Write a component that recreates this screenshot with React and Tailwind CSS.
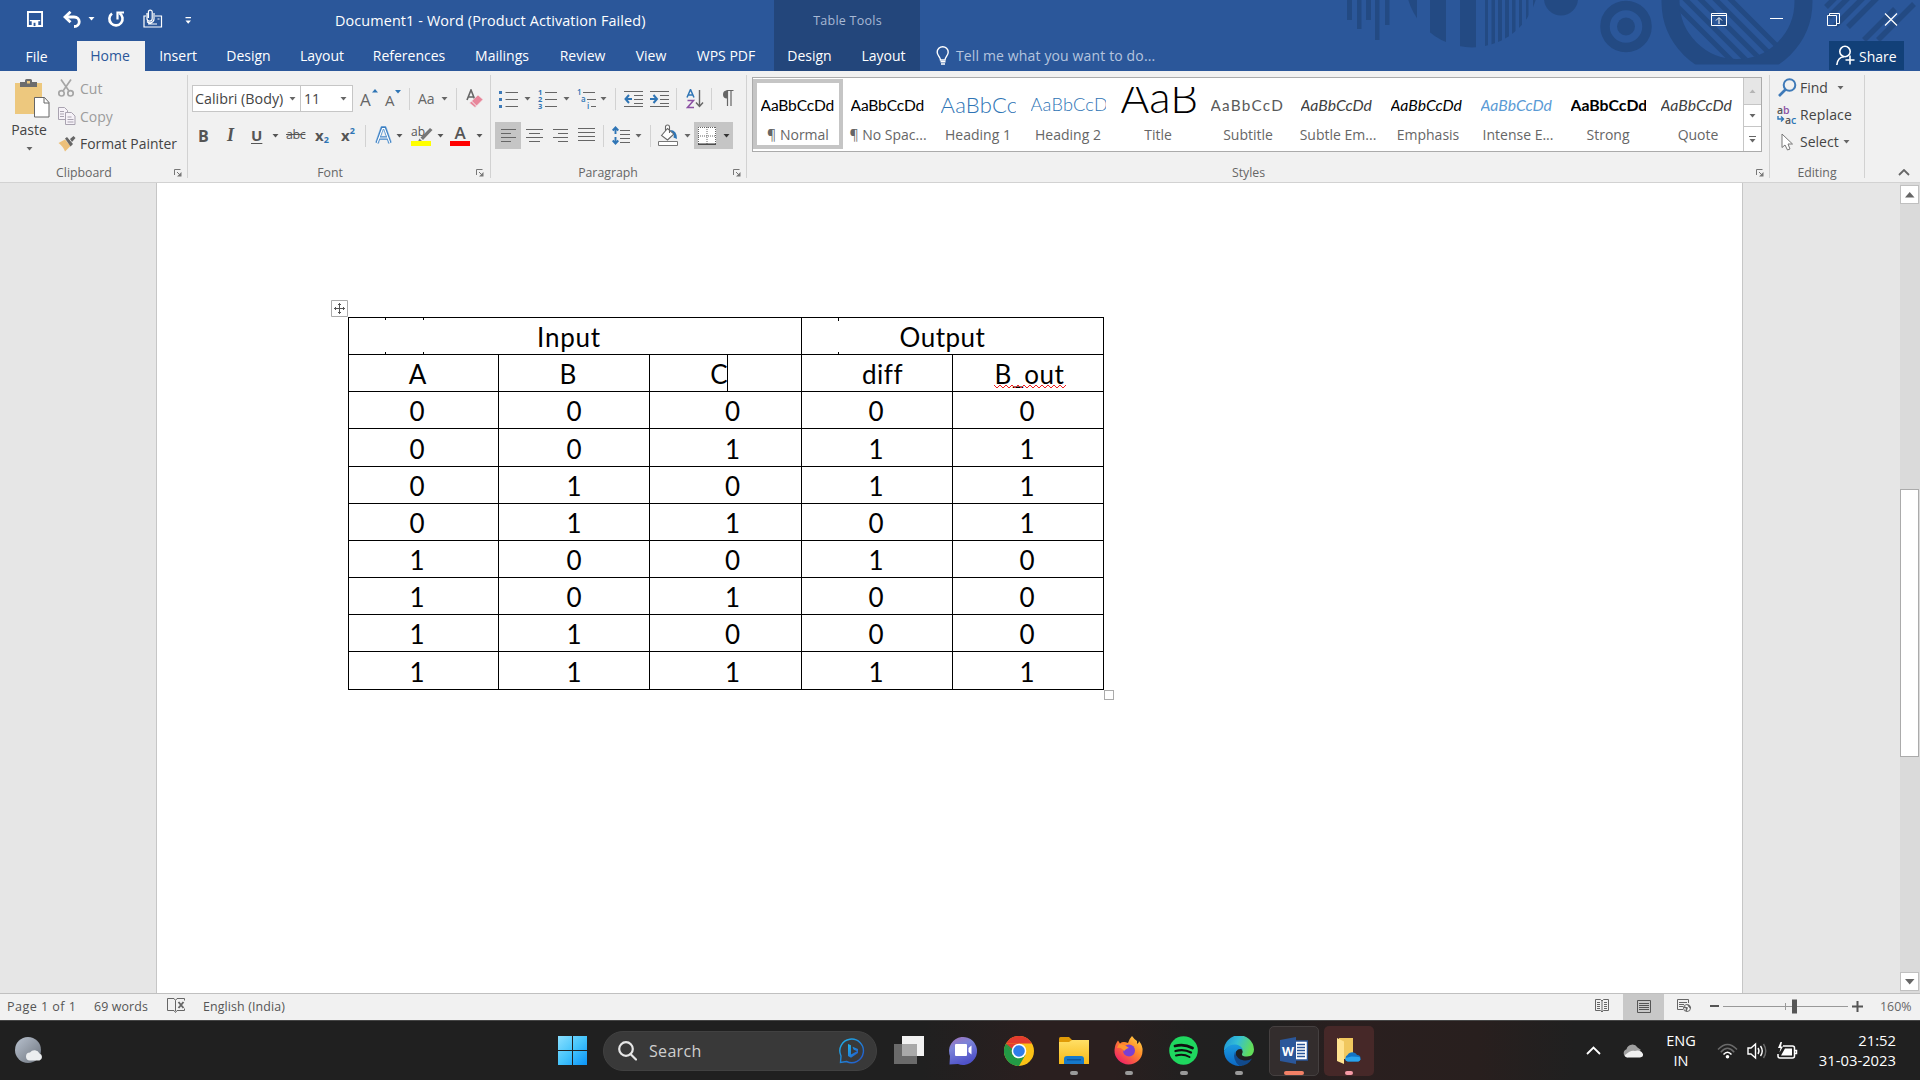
import React from "react";

const Caret = ({ className = "" }) => (
  <svg className={"shrink-0 " + className} width="7" height="4" viewBox="0 0 7 4">
    <path d="M0.5 0H6.5L3.5 3.6Z" fill="currentColor" />
  </svg>
);

const Sep = ({ className = "" }) => <div className={"h-[22px] w-px shrink-0 bg-[#d2d2d2] " + className} />;

const Launcher = ({ className = "" }) => (
  <svg className={"shrink-0 " + className} width="8" height="8" viewBox="0 0 8 8" fill="none" stroke="#777">
    <path d="M0.5 6V0.5H6.5M3 3L6 6" />
    <path d="M7.5 3V7.5H3Z" fill="#777" stroke="none" />
  </svg>
);

const T = ({ className = "", children }) => (
  <div className={"flex shrink-0 items-center whitespace-nowrap " + className}>{children}</div>
);

/* ---------- title bar ---------- */

const RibbonArt = () => (
  <svg className="absolute right-0 top-0" width="580" height="71" viewBox="1340 0 580 71" fill="#234a83">
    <path d="M1347 0h5v20h-5zM1357 0h4.500v29h-4.500zM1366 0h5v20h-5zM1375 0h4.500v40h-4.500zM1385 0h4.500v25h-4.500z" />
    <clipPath id="disc"><circle cx="1472" cy="-19" r="66.400" /></clipPath>
    <g clipPath="url(#disc)">
      <path d="M1404 0h13v60h-13zM1430 0h16v60h-16zM1460 0h16v60h-16zM1485 0h3v60h-3zM1491.500 0h3.500v60h-3.500zM1498 0h4v60h-4zM1505 0h4v60h-4zM1512 0h3.500v60h-3.500zM1519 0h3v60h-3zM1526 0h2.500v60h-2.500zM1533 0h3v60h-3z" />
    </g>
    <circle cx="1561" cy="-1.500" r="17" />
    <circle cx="1626" cy="26.500" r="21" fill="none" stroke="#234a83" strokeWidth="9.500" />
    <circle cx="1626" cy="26.500" r="9" />
    <clipPath id="ringClip"><path d="M1650 0h180v64.500h-180z" /></clipPath>
    <g clipPath="url(#ringClip)">
      <circle cx="1737" cy="1.500" r="66.500" fill="none" stroke="#234a83" strokeWidth="18" />
    </g>
    <clipPath id="ringInner"><circle cx="1737" cy="1.500" r="58" /></clipPath>
    <g clipPath="url(#ringInner)" stroke="#234a83" strokeWidth="5" fill="none">
      <path d="M1668 -3L1738 67M1683 -3L1753 67M1698 -3L1768 67M1711 -5L1781 65M1724 -7L1794 63" />
    </g>
    <g stroke="#234a83" strokeWidth="5.500" fill="none">
      <path d="M1826 7L1836 -3M1829 17L1849 -3M1835 26L1864 -3M1848 27L1878 -3M1864 40L1895 9M1878 40L1914 4" />
    </g>
  </svg>
);

const tabs = [
  ["Insert", "ml-[15px] w-[36px]"],
  ["Design", "ml-[30px] w-[45px]"],
  ["Layout", "ml-[29px] w-[44px]"],
  ["References", "ml-[29px] w-[72px]"],
  ["Mailings", "ml-[29px] w-[56px]"],
  ["Review", "ml-[29px] w-[47px]"],
  ["View", "ml-[29px] w-[32px]"],
  ["WPS PDF", "ml-[29px] w-[60px]"],
];

const TitleBar = () => (
  <header className="relative flex h-[71px] shrink-0 bg-[#2b579a] text-[14px] text-white">
    <RibbonArt />
    <div className="flex w-[774px] flex-col">
      <div className="flex h-[41px] items-center">
        <svg className="ml-[27px] mt-[-3px] shrink-0" width="16" height="16" viewBox="0 0 17 17">
          <path d="M1 1H16V16H1Z" fill="none" stroke="#fff" strokeWidth="2" />
          <path d="M3 9.500h11v1.500H3zM5 11h7v5H5z" fill="#fff" />
          <path d="M7 12.500h2V16H7z" fill="#2b579a" />
        </svg>
        <svg className="ml-[20px] mt-[-3px] shrink-0" width="19" height="17" viewBox="0 0 19 17" fill="none" stroke="#fff" strokeWidth="2.800">
          <path d="M2.500 6H11c7 0 7 9.500 0 9.500" />
          <path d="M7.500 0.800L2 6l5.500 5.200" />
        </svg>
        <Caret className="-mt-[4px] ml-[6px]" />
        <svg className="ml-[12px] mt-[-3px] shrink-0" width="18" height="18" viewBox="0 0 18 18" fill="none" stroke="#fff" strokeWidth="2.600">
          <path d="M5 3.500A6.600 6.600 0 1 0 12.500 3.200" />
          <path d="M10.500 9.500V2.500H17" strokeWidth="2.200" />
        </svg>
        <svg className="ml-[18px] mt-[-5px] shrink-0" width="20" height="19" viewBox="0 0 20 19" fill="none" stroke="#fff" strokeWidth="1.200">
          <path d="M3 7H1v11h17.500V7H12" />
          <path d="M4 4v5.500a2.600 2.600 0 0 0 5.200 0V3a1.900 1.900 0 0 0-3.800 0v6M11 4v6a4 4 0 0 1-7 2.500M14.500 10h2M5 15h9" />
        </svg>
        <svg className="ml-[22px] shrink-0" width="7" height="8" viewBox="0 0 7 8" fill="#fff"><path d="M0.500 0h5.500v1.300H0.500zM0.500 3.500h5.500L3.200 6.800z" /></svg>
        <T className="ml-[143px] w-[306px] text-[14.400px] tracking-[0.008em]">Document1 - Word (Product Activation Failed)</T>
      </div>
      <div className="flex h-[30px] items-center">
        <T className="w-[77px] justify-center pr-[4px] pt-[1px]">File</T>
        <T className="h-full w-[68px] justify-center bg-[#f1f1f1] pb-[2px] pr-[2px] text-[#2b579a]">Home</T>
        {tabs.map(([name, cls]) => (
          <T key={name} className={"justify-center pb-[2px] " + cls}>{name}</T>
        ))}
      </div>
    </div>
    <div className="flex w-[146px] flex-col bg-[#23467b]">
      <T className="h-[41px] justify-center pl-[1px] pt-[1px] text-[12.500px] tracking-[0.02em] text-[#a8b9d5]">Table Tools</T>
      <div className="flex h-[30px] pb-[2px]">
        <T className="ml-[13px] w-[45px] justify-center">Design</T>
        <T className="ml-[29px] w-[45px] justify-center">Layout</T>
      </div>
    </div>
    <div className="relative flex flex-1 flex-col">
      <div className="flex h-[41px] items-start justify-end pr-[22px] pt-[13px]">
        <svg width="16" height="13" viewBox="0 0 16 13" fill="none" stroke="#fff"><path d="M0.500 0.500h15v12h-15zM0.500 2.500h15M8 11V5M5 7.500L8 4.500L11 7.500" /></svg>
        <svg className="ml-[43px]" width="13" height="13" viewBox="0 0 13 13" stroke="#fff"><path d="M0 5.500h13" /></svg>
        <svg className="ml-[44px]" width="13" height="13" viewBox="0 0 13 13" fill="none" stroke="#fff"><path d="M0.500 2.500h9v10h-9zM2.500 2.500v-2h10v10h-2.500" /></svg>
        <svg className="ml-[44px]" width="14" height="13" viewBox="0 0 14 13" stroke="#fff" strokeWidth="1.200"><path d="M1 0.500L13 12.500M13 0.500L1 12.500" /></svg>
      </div>
      <div className="flex h-[30px] items-start">
        <svg className="ml-[16px] mt-[5px] shrink-0" width="14" height="20" viewBox="0 0 14 20" fill="none" stroke="#fff" strokeWidth="1.400">
          <path d="M4.500 14C4.500 11 1.200 9.500 1.200 6.200a5.500 5.500 0 0 1 11 0C12.200 9.500 9 11 9 14ZM4.500 15.800h5M5 18h4" />
        </svg>
        <T className="ml-[6px] h-[29px] text-[14px] tracking-[0.01em] text-[#b5c5df]">Tell me what you want to do...</T>
        <T className="ml-auto mr-[16px] h-[29px] w-[75px] bg-[#124078] pl-[7px]">
          <svg width="20" height="21" viewBox="0 0 20 21" fill="none" stroke="#fff" strokeWidth="1.600">
            <circle cx="9" cy="6.500" r="5.200" /><path d="M0.800 20C1.500 14.500 4 12 8 11.800M14 10.500v9M9.500 15h9" />
          </svg>
          <span className="ml-[3px] pt-[1px]">Share</span>
        </T>
      </div>
    </div>
  </header>
);

/* ---------- ribbon ---------- */

const Group = ({ width, label, launcher, labelPad = "", children }) => (
  <div className={"flex shrink-0 flex-col " + width}>
    <div className="h-[88px]">{children}</div>
    <div className="flex h-[23px] items-center pt-[4px]">
      <span className={"flex-1 whitespace-nowrap text-center text-[12.300px] leading-[18px] text-[#666] " + labelPad}>{label}</span>
      {launcher && <Launcher className="mr-[5px]" />}
    </div>
  </div>
);
const GroupLine = () => <div className="mt-[4px] h-[103px] w-px shrink-0 bg-[#d2d2d2]" />;

const Clipboard = () => (
  <Group width="w-[187px]" label="Clipboard" launcher labelPad="pr-[6px]">
    <div className="flex text-[#444]">
      <div className="flex w-[58px] flex-col items-center pt-[8px]">
        <svg className="ml-[6px]" width="35" height="39" viewBox="0 0 35 39">
          <path d="M0 4h27v31H0z" fill="#edc87e" />
          <path d="M5 8V3h5V1.500Q10 0 11.500 0h4Q17 0 17 1.500V3h5v5z" fill="#6d6d6d" /><path d="M12 2h3v2.500h-3z" fill="#edc87e" />
          <path d="M19.500 18.500h10l4.500 5v14.500h-14.500z" fill="#fff" stroke="#666" /><path d="M29 18.500v5.500h5" fill="none" stroke="#666" />
        </svg>
        <span className="mt-[3px] text-[14px] leading-[18px]">Paste</span>
        <Caret className="mt-[8px] text-[#666]" />
      </div>
      <div className="flex flex-col pt-[3px] text-[14px]">
        <T className="h-[28px] text-[#9c9c9c]">
          <svg width="16" height="18" viewBox="0 0 16 18" fill="none" stroke="#a6a6a6" strokeWidth="1.700">
            <path d="M3 0.500L11 12M13 0.500L5 12" /><circle cx="3.500" cy="14.300" r="2.700" /><circle cx="12.500" cy="14.300" r="2.700" />
          </svg>
          <span className="ml-[6px]">Cut</span>
        </T>
        <T className="h-[28px] text-[#9c9c9c]">
          <svg width="18" height="18" viewBox="0 0 18 18" fill="#f6f2f8" stroke="#a9a3b0">
            <path d="M0.500 0.500h6l3 3v9h-9zM2 4.500h4M2 7h4M2 9.500h4" /><path d="M7.500 5.500h6l3.500 3.500v8.500H7.500zM9.500 10h4M9.500 12.500h6M9.500 15h6" />
          </svg>
          <span className="ml-[4px]">Copy</span>
        </T>
        <T className="h-[28px]">
          <svg width="18" height="16" viewBox="0 0 18 16">
            <path d="M0.500 7L7 3.500L12.500 10L7 15.500Q5 10 0.500 7" fill="#edc07a" /><path d="M7 2.500L9 1L15 8L12.500 10.500zM12 3L15.500 0L17.500 2L14 6z" fill="#666" />
          </svg>
          <span className="ml-[4px] text-[13.900px]">Format Painter</span>
        </T>
      </div>
    </div>
  </Group>
);

const FontGroup = () => (
  <Group width="w-[301px]" label="Font" launcher labelPad="pr-[4px]">
    <div className="mt-[14px] flex h-[27px] items-center pl-[4px] text-[#666]">
      <div className="flex h-[27px] w-[109px] shrink-0 items-center border border-[#c6c6c6] bg-white">
        <span className="ml-[2px] w-[90px] overflow-hidden whitespace-nowrap text-[14.300px] leading-[20px] text-[#444]">Calibri (Body)</span>
        <Caret className="ml-[4px]" />
      </div>
      <div className="-ml-px flex h-[27px] w-[53px] shrink-0 items-center border border-[#c6c6c6] bg-white">
        <span className="ml-[3px] w-[36px] text-[14px] text-[#444]">11</span>
        <Caret />
      </div>
      <T className="ml-[7px] w-[16px] pt-[2px] text-[17px]">A</T>
      <svg className="-ml-[4px] -mt-[15px] shrink-0" width="6" height="4" viewBox="0 0 6 4"><path d="M0 3.500h6L3 0z" fill="#2f75b5" /></svg>
      <T className="ml-[7px] w-[14px] pt-[3px] text-[15px]">A</T>
      <svg className="-ml-[4px] -mt-[14px] shrink-0" width="6" height="4" viewBox="0 0 6 4"><path d="M0 0h6L3 3.500z" fill="#2f75b5" /></svg>
      <Sep className="ml-[8px]" />
      <T className="ml-[8px] w-[20px] text-[14px]">Aa</T>
      <Caret className="ml-[3px]" />
      <Sep className="ml-[8px]" />
      <svg className="ml-[9px] shrink-0" width="18" height="19" viewBox="0 0 18 19">
        <path d="M1 11L5 1L9 11M2.500 8h5" stroke="#666" strokeWidth="1.600" fill="none" /><path d="M3.500 14L12 6l5 4.500L9 18.500z" fill="#e8869a" stroke="#f1f1f1" strokeWidth="0.600" /><path d="M5.500 12L10.500 17" stroke="#f1f1f1" />
      </svg>
    </div>
    <div className="mt-[10px] flex h-[27px] items-center text-[#555]">
      <T className="ml-[10px] w-[13px] text-[16px] font-bold">B</T>
      <T className="ml-[14px] w-[12px] pl-[2px] font-['Liberation_Serif'] text-[18px] font-bold italic">I</T>
      <T className="ml-[14px] w-[13px] text-[15px] font-bold underline underline-offset-2">U</T>
      <Caret className="ml-[8px]" />
      <T className="ml-[7px] w-[21px] text-[12.500px] tracking-[-0.03em] line-through">abc</T>
      <T className="ml-[8px] w-[16px] text-[15px] font-bold">x<span className="mt-[8px] text-[9px] text-[#2f75b5]">2</span></T>
      <T className="ml-[10px] w-[16px] text-[15px] font-bold">x<span className="-mt-[10px] text-[9px] text-[#2f75b5]">2</span></T>
      <Sep className="ml-[8px]" />
      <svg className="ml-[9px] shrink-0" width="17" height="19" viewBox="0 0 17 19" fill="none">
        <path d="M2 17L7.200 2H9.800L15 17M4.500 12H12.500" stroke="#9cc3e8" strokeWidth="4" strokeLinejoin="round" /><path d="M2 17L7.200 2H9.800L15 17M4.500 12H12.500" stroke="#3d7fc0" strokeWidth="2.800" /><path d="M2.200 16.700L7.500 2.500H9.500L14.800 16.700M4.500 12H12.500" stroke="#fff" strokeWidth="1.200" />
      </svg>
      <Caret className="ml-[4px]" />
      <div className="ml-[8px] flex w-[20px] shrink-0 flex-col">
        <div className="flex h-[15px] items-start text-[12px] leading-[11px]">
          ab
          <svg className="-ml-[9px] mt-[1px] shrink-0" width="17" height="15" viewBox="0 0 17 15"><path d="M14 1L16.500 3L7 13L4.500 10.500zM3.500 11.500L6 14L2 14.500z" fill="#777" /></svg>
        </div>
        <div className="h-[5px] bg-[#ffff00]" />
      </div>
      <Caret className="ml-[6px]" />
      <div className="ml-[6px] flex w-[20px] shrink-0 flex-col items-center">
        <span className="h-[15px] text-[17px] font-semibold leading-[13px]">A</span>
        <div className="h-[5px] w-full bg-[#ff0000]" />
      </div>
      <Caret className="ml-[6px]" />
    </div>
  </Group>
);

const Lines = ({ d, className = "" }) => (
  <svg className={"shrink-0 " + className} width="17" height="15" viewBox="0 0 17 15" stroke="#666" fill="none"><path d={d} /></svg>
);

const Paragraph = () => (
  <Group width="w-[255px]" label="Paragraph" launcher labelPad="pr-[8px]">
    <div className="mt-[14px] flex h-[27px] items-center text-[#666]">
      <svg className="ml-[8px] shrink-0" width="19" height="18" viewBox="0 0 19 18"><path d="M6.500 2.500H19M6.500 9.500H19M6.500 16.500H19" stroke="#666" /><path d="M0 1h3v3H0zM0 8h3v3H0zM0 15h3v3H0z" fill="#3d7ab8" /></svg>
      <Caret className="ml-[6px]" />
      <svg className="ml-[7px] shrink-0 overflow-visible" width="19" height="20" viewBox="0 0 19 20"><path d="M7 3.500H19M7 10.500H19M7 17.500H19" stroke="#666" /><g fill="#2f75b5" fontSize="7.500" fontWeight="700" fontFamily="Open Sans"><text x="0" y="6">1</text><text x="0" y="13">2</text><text x="0" y="20">3</text></g></svg>
      <Caret className="ml-[6px]" />
      <svg className="ml-[7px] shrink-0 overflow-visible" width="19" height="20" viewBox="0 0 19 20"><path d="M6 3.500H18M10 10.500H19M14 17.500H19" stroke="#666" /><g fill="#2f75b5" fontSize="8" fontWeight="600" fontFamily="Open Sans"><text x="0" y="6">1</text><text x="4" y="13">a</text><text x="10" y="20">i</text></g></svg>
      <Caret className="ml-[4px]" />
      <Sep className="ml-[8px]" />
      <svg className="ml-[8px] shrink-0" width="19" height="18" viewBox="0 0 19 18" fill="none"><path d="M0 1.500H19M10 5.500h9M10 9.500h9M10 13.500h9M0 16.500H19" stroke="#666" /><path d="M8 9H2M5 5L1.500 9L5 13" stroke="#2f75b5" strokeWidth="2" /></svg>
      <svg className="ml-[7px] shrink-0" width="19" height="18" viewBox="0 0 19 18" fill="none"><path d="M0 1.500H19M10 5.500h9M10 9.500h9M10 13.500h9M0 16.500H19" stroke="#666" /><path d="M0 9H6M3.500 5L7 9L3.500 13" stroke="#2f75b5" strokeWidth="2" /></svg>
      <Sep className="ml-[7px]" />
      <svg className="ml-[9px] shrink-0" width="18" height="20" viewBox="0 0 18 20" fill="none"><path d="M1 8.500L4.500 0.500L8 8.500M2.500 6h4" stroke="#2f75b5" strokeWidth="1.500" /><path d="M1.500 11.500H7.500L1.500 18.500H8" stroke="#8c51a5" strokeWidth="1.500" /><path d="M13.500 1V17M10 13.500L13.500 17.500L17 13.500" stroke="#666" strokeWidth="1.400" /></svg>
      <Sep className="ml-[7px]" />
      <svg className="ml-[9px] shrink-0" width="13" height="17" viewBox="0 0 13 17"><path d="M5.500 0.500H12.500M6.500 1V16M10 1V16" stroke="#666" strokeWidth="1.200" /><path d="M6 0.500a4 4 0 0 0 0 8z" fill="#666" /></svg>
    </div>
    <div className="mt-[10px] flex h-[27px] items-center text-[#666]">
      <div className="ml-[4px] flex h-full w-[26px] items-center justify-center bg-[#c5c5c5]"><Lines d="M1 1.500h15M1 5.500h10M1 9.500h15M1 13.500h10" /></div>
      <Lines className="ml-[5px]" d="M0 1.500h17M3 5.500h11M0 9.500h17M3 13.500h11" />
      <Lines className="ml-[9px]" d="M1 1.500h15M6 5.500h10M1 9.500h15M6 13.500h10" />
      <Lines className="ml-[9px]" d="M0 0.500h17M0 4.500h17M0 8.500h17M0 12.500h17" />
      <Sep className="ml-[8px]" />
      <svg className="ml-[8px] shrink-0" width="18" height="19" viewBox="0 0 18 19" fill="none"><path d="M8 4.500h10M8 8.500h10M8 12.500h10M8 16.500h10" stroke="#666" /><path d="M3.500 1.500V8M0.700 4.500L3.500 1.500L6.300 4.500M3.500 11V17.500M0.700 14.500L3.500 17.500L6.300 14.500" stroke="#2f75b5" strokeWidth="1.900" /></svg>
      <Caret className="ml-[5px]" />
      <Sep className="ml-[8px]" />
      <svg className="ml-[7px] shrink-0" width="21" height="23" viewBox="0 -1 21 23" fill="none"><path d="M3.500 10.500L9.500 3.500L16 9L9.500 15zM7.500 6V2a2 2 0 0 1 4 0V8" stroke="#666" strokeWidth="1.100" fill="#fff" /><path d="M12 5Q19 5 19 14L15.500 12.500L16 9z" fill="#2f75b5" /><path d="M0.500 16.500h19v4h-19z" fill="#fff" stroke="#777" /></svg>
      <Caret className="ml-[5px]" />
      <div className="ml-[3px] flex h-full w-[39px] items-center bg-[#c5c5c5] pl-[4px] text-[#333]">
        <svg width="18" height="18" viewBox="0 0 18 18"><path d="M0 0h18v18H0z" fill="#fff" /><path d="M0.500 0V18M17.500 0V18M9 0V18M0 0.500H18M0 9H18" stroke="#666" strokeDasharray="1 1" /><path d="M0 17.200H18" stroke="#444" strokeWidth="1.500" /></svg>
        <Caret className="ml-[7px]" />
      </div>
    </div>
  </Group>
);

const styleList = [
  ["AaBbCcDd", "¶ Normal", "mb-[5px] text-[15.600px] tracking-[-0.01em] text-black"],
  ["AaBbCcDd", "¶ No Spac...", "mb-[5px] text-[15.600px] tracking-[-0.01em] text-black"],
  ["AaBbCc", "Heading 1", "mb-[5px] text-[22px] font-light text-[#2e74b5] tracking-[0.01em]"],
  ["AaBbCcD", "Heading 2", "mb-[6px] text-[18.200px] font-light text-[#2e74b5] tracking-[0.01em]"],
  ["AaB", "Title", "mb-[14px] text-[44px] font-light text-black"],
  ["AaBbCcD", "Subtitle", "mb-[5px] text-[15.300px] tracking-[0.08em] text-[#5a5a5a]"],
  ["AaBbCcDd", "Subtle Em...", "mb-[5px] text-[15.800px] italic text-[#404040]"],
  ["AaBbCcDd", "Emphasis", "mb-[5px] text-[15.800px] italic text-black"],
  ["AaBbCcDd", "Intense E...", "mb-[5px] text-[15.800px] italic text-[#5b9bd5]"],
  ["AaBbCcDd", "Strong", "mb-[5px] text-[15.800px] font-bold text-black"],
  ["AaBbCcDd", "Quote", "mb-[5px] text-[15.800px] italic text-[#404040]"],
];

const Styles = () => (
  <Group width="w-[1022px]" label="Styles" launcher labelPad="pr-[6px]">
    <div className="ml-[5px] mt-[6px] flex h-[75px] w-[1010px] border border-[#ababab] bg-white">
      {styleList.map(([sample, name, cls], i) => (
        <div key={name} className={"mt-[1px] flex h-[70px] w-[90px] shrink-0 flex-col items-center border-4 " + (i === 0 ? "border-[#c5c5c5]" : "border-transparent")}>
          <div className="mt-[4px] flex h-[33px] w-[75px] shrink-0 items-end overflow-hidden">
            <span className={"whitespace-nowrap font-['Lato'] leading-[20px] " + cls}>{sample}</span>
          </div>
          <span className="mt-[5px] whitespace-nowrap text-[14px] leading-[19px] text-[#666]">{name}</span>
        </div>
      ))}
      <div className="ml-auto flex w-[18px] flex-col border-l border-[#c6c6c6] text-[#666]">
        <div className="flex h-[26px] items-center justify-center bg-[#e6e6e6] text-[#b5b5b5]"><Caret className="rotate-180" /></div>
        <div className="flex h-[23px] items-center justify-center border-y border-[#c6c6c6]"><Caret /></div>
        <div className="flex flex-1 flex-col items-center justify-center"><div className="mb-[2px] h-px w-[7px] bg-[#666]" /><Caret /></div>
      </div>
    </div>
  </Group>
);

const Editing = () => (
  <Group width="w-[94px]" label="Editing">
    <div className="flex flex-col pl-[7px] pt-[3px] text-[14px] text-[#444]">
      <T className="h-[27px]">
        <svg className="ml-[1px]" width="19" height="19" viewBox="0 0 19 19" fill="none" stroke="#3f7ab8"><circle cx="11.500" cy="7" r="5.800" strokeWidth="2" /><path d="M7.500 11.500L1 18" strokeWidth="2.600" /></svg>
        <span className="ml-[3px] w-[37px]">Find</span><Caret className="text-[#666]" />
      </T>
      <T className="h-[27px]">
        <svg className="overflow-visible" width="20" height="20" viewBox="0 0 20 20" fontFamily="Open Sans" fontSize="10.500" fontWeight="600"><text x="0" y="9" fill="#555">a</text><text x="6" y="9" fill="#8c51a5">b</text><text x="8" y="18.500" fill="#555">a</text><text x="14" y="18.500" fill="#2f75b5">c</text><path d="M1 11v3h5M4 11.500L6.500 14L4 16.500" stroke="#2f75b5" strokeWidth="1.400" fill="none" /></svg>
        <span className="ml-[3px] tracking-[0.01em]">Replace</span>
      </T>
      <T className="h-[27px]">
        <svg className="ml-[4px]" width="13" height="18" viewBox="0 0 13 18"><path d="M1 1V14.500L4 12L6.500 17L9 16L7 11H11.500z" fill="#fff" stroke="#777" /></svg>
        <span className="ml-[6px] w-[43px]">Select</span><Caret className="text-[#666]" />
      </T>
    </div>
  </Group>
);

const Ribbon = () => (
  <section className="flex h-[112px] shrink-0 border-b border-[#d2d2d2] bg-[#f1f1f1]">
    <Clipboard /><GroupLine /><FontGroup /><div className="w-px" /><GroupLine /><Paragraph /><GroupLine /><Styles /><GroupLine /><Editing /><GroupLine />
    <div className="flex flex-1 items-end justify-end pb-[6px] pr-[10px]">
      <svg width="12" height="7" viewBox="0 0 12 7" fill="none" stroke="#666" strokeWidth="1.800"><path d="M1 6L6 1L11 6" /></svg>
    </div>
  </section>
);

/* ---------- document ---------- */

const rows = ["00000", "00111", "01011", "01101", "10010", "10100", "11000", "11111"];
const rowHeights = ["h-[37px]", "h-[38px]", "h-[37px]", "h-[37px]", "h-[37px]", "h-[37px]", "h-[37px]", "h-[38px]"];
const cols = ["w-[150px] pr-[13px]", "w-[151px]", "w-[152px] pl-[14px]", "w-[151px] pr-[2px]", "w-[151px] pr-[2px]"];
const Cell = ({ className = "", children }) => (
  <div className={"relative flex h-full shrink-0 items-center justify-center border-b border-r border-black pt-[2px] " + className}>{children}</div>
);
const Tick = ({ className }) => <div className={"absolute w-px bg-black " + className} />;

const TruthTable = () => (
  <div className="relative ml-[191px] mt-[134px] w-[756px] border-l border-t border-black font-['Lato'] text-[26px] leading-none text-black">
    <svg className="absolute -left-[18px] -top-[18px]" width="17" height="17" viewBox="0 0 17 17" fill="#fff" stroke="#ababab"><path d="M0.500 0.500h16v16h-16z" /><path d="M8.500 3V14M3 8.500H14M7 4.500h3M7 12.500h3M4.500 7v3M12.500 7v3" stroke="#555" fill="none" /></svg>
    <div className="flex h-[37px]">
      <Cell className="w-[453px] pr-[12px] tracking-[0.03em]">Input
        <Tick className="left-[36px] top-0 h-[2px]" /><Tick className="left-[74px] top-0 h-[2px]" /><Tick className="bottom-0 left-[36px] h-[2px]" /><Tick className="bottom-0 left-[74px] h-[2px]" />
      </Cell>
      <Cell className="w-[302px] pr-[20px] tracking-[0.02em]">Output<Tick className="left-[36px] top-0 h-[3px]" /><Tick className="bottom-0 left-[36px] h-[2px]" /></Cell>
    </div>
    <div className="flex h-[37px]">
      <Cell className="w-[150px] pr-[12px]">A</Cell>
      <Cell className="w-[151px] pr-[12px]">B</Cell>
      <Cell className="w-[152px] pr-[13px]">C<div className="absolute left-[77px] top-0 h-[36px] w-px bg-black" /></Cell>
      <Cell className="w-[151px] pl-[11px] pr-0 tracking-[0.02em] [font-variant-ligatures:none]">diff</Cell>
      <Cell className="w-[151px] pl-[3px] tracking-[0.02em]">B_out
        <svg className="absolute bottom-[2px] left-[41px]" width="73" height="5" viewBox="0 0 73 5" fill="none" stroke="#f02020"><path d="M0 1l3 3l3-3l3 3l3-3l3 3l3-3l3 3l3-3l3 3l3-3l3 3l3-3l3 3l3-3l3 3l3-3l3 3l3-3l3 3l3-3l3 3l3-3l3 3l3-3" /></svg>
      </Cell>
    </div>
    {rows.map((r, i) => (
      <div key={r} className={"flex " + rowHeights[i]}>
        {r.split("").map((v, j) => <Cell key={j} className={cols[j]}>{v}</Cell>)}
      </div>
    ))}
    <div className="absolute -bottom-[10px] -right-[10px] h-[10px] w-[10px] border border-[#ababab] bg-white" />
  </div>
);

const Document = () => (
  <main className="flex h-[810px] shrink-0 bg-[#e6e6e6]">
    <div className="ml-[156px] w-[1587px] border-x border-[#c6c6c6] bg-white"><TruthTable /></div>
    <div className="ml-auto flex w-[20px] flex-col bg-[#dadada] pt-[2px]">
      <div className="flex h-[19px] w-[19px] items-center justify-center border border-[#c0c0c0] bg-white"><svg width="10" height="6" viewBox="0 0 10 6"><path d="M0 5.500h9.500L4.700 0z" fill="#666" /></svg></div>
      <div className="mt-[285px] h-[268px] w-[19px] border border-[#ababab] bg-white" />
      <div className="mb-[2px] mt-auto flex h-[19px] w-[19px] items-center justify-center border border-[#c0c0c0] bg-white"><svg width="10" height="6" viewBox="0 0 10 6"><path d="M0 0h9.500L4.700 5.500z" fill="#666" /></svg></div>
    </div>
  </main>
);

const StatusBar = () => (
  <footer className="flex h-[27px] shrink-0 items-center border-t border-[#c0c0c0] bg-[#f1f1f1] text-[12.400px] text-[#555]">
    <T className="ml-[7px] w-[87px] text-[12.600px] tracking-[0.035em]">Page 1 of 1</T>
    <T className="w-[73px] tracking-[0.01em]">69 words</T>
    <svg className="-mt-[3px] shrink-0" width="18" height="15" viewBox="0 0 18 15" fill="none" stroke="#666"><path d="M8.500 2.500L7 0.500H0.500v12H7l1.500 2l1.500-2h7.500v-2M8.500 2.500V13M8.500 2.500L10 0.500h7.500v2" /><path d="M11.500 4L16.500 10M16.500 4L11.500 10" strokeWidth="1.900" /></svg>
    <T className="ml-[18px] tracking-[0.01em]">English (India)</T>
    <svg className="-mt-[3px] ml-auto shrink-0" width="14" height="14" viewBox="0 0 14 14" fill="none" stroke="#666"><path d="M7 2L5.500 0.500H0.500v11H5.500L7 13L8.500 11.500H13.500v-11H8.500L7 2V13M2 3.500h3M2 5.500h3M2 7.500h3M2 9.500h3M9 3.500h3M9 5.500h3M9 7.500h3M9 9.500h3" /></svg>
    <div className="ml-[14px] flex h-full w-[41px] items-center justify-center bg-[#c8c8c8] pb-[2px]">
      <svg width="14" height="13" viewBox="0 0 14 13" fill="none" stroke="#555"><path d="M0.500 0.500h13v12h-13zM2 3.500h10M2 5.500h10M2 7.500h10M2 9.500h10" /></svg>
    </div>
    <svg className="-mt-[3px] ml-[13px] shrink-0" width="15" height="14" viewBox="0 0 15 14" fill="none" stroke="#666"><path d="M6 10.500H0.500V0.500h11V4M2 3.500h8M2 5.500h5M2 7.500h4" /><circle cx="10" cy="9" r="3.500" fill="#fff" /><path d="M7 8l3 1l-1 3M11 6l2.500 3" strokeWidth="1.600" /></svg>
    <div className="-mt-[2px] ml-[18px] h-[2px] w-[9px] bg-[#555]" />
    <svg className="-mt-[2px] ml-[4px] shrink-0" width="125" height="15" viewBox="0 0 125 15"><path d="M0 7.500h125M62.500 4v7" stroke="#999" /><path d="M69 0.500h5v14h-5z" fill="#555" /></svg>
    <svg className="-mt-[2px] ml-[4px] shrink-0" width="11" height="11" viewBox="0 0 11 11"><path d="M5.500 0v11M0 5.500h11" stroke="#555" strokeWidth="2" /></svg>
    <T className="ml-[17px] w-[40px] text-[#666]">160%</T>
  </footer>
);

/* ---------- taskbar ---------- */

const Dot = ({ className = "w-[8px] bg-[#9a9a9a]" }) => <div className={"absolute bottom-[6px] left-1/2 h-[4px] -translate-x-1/2 rounded-full " + className} />;
const TaskButton = ({ className = "", children }) => <div className={"relative flex h-[60px] w-[55px] shrink-0 items-center justify-center " + className}>{children}</div>;

const Taskbar = () => (
  <nav className="flex h-[60px] shrink-0 items-center border-t border-[#454545] bg-[linear-gradient(90deg,#202020_0%,#202020_48%,#2a1f1f_54%,#2a1f1f_58%,#212020_62%,#202020_66%,#2a1f1f_70%,#281f1e_77%,#202020_82%,#202020_100%)] text-white">
    <svg className="ml-[15px] shrink-0" width="29" height="28" viewBox="0 0 29 28">
      <defs><linearGradient id="moon" x2="1" y2="1"><stop stopColor="#b9c2cf" /><stop offset="1" stopColor="#6c737d" /></linearGradient></defs>
      <circle cx="13" cy="13" r="13" fill="url(#moon)" /><path d="M15 23.500a4 4 0 0 1 0-8a5.500 5.500 0 0 1 9.500 1a3.700 3.700 0 0 1 0 7z" fill="#eceef0" />
    </svg>
    <svg className="ml-[514px] shrink-0" width="29" height="29" viewBox="0 0 29 29">
      <defs><linearGradient id="win" x2="1" y2="1"><stop stopColor="#8be0ff" /><stop offset=".5" stopColor="#45c4fb" /><stop offset="1" stopColor="#0a93f7" /></linearGradient></defs>
      <path d="M0 0h14v14H0zM15 0h14v14H15zM0 15h14v14H0zM15 15h14v14H15z" fill="url(#win)" />
    </svg>
    <div className="ml-[16px] flex h-[40px] w-[274px] shrink-0 items-center rounded-full border border-[#414141] bg-[#393939] pl-[14px] pr-[11px]">
      <svg width="19" height="20" viewBox="0 0 19 20" fill="none" stroke="#e6e6e6" strokeWidth="2.200"><circle cx="8" cy="8" r="6.800" /><path d="M12.500 13L18 18.500" strokeLinecap="round" /></svg>
      <span className="ml-[12px] text-[16px] tracking-[0.02em] text-[#cfcfcf]">Search</span>
      <svg className="ml-auto" width="26" height="26" viewBox="0 0 26 26" fill="none"><defs><linearGradient id="bing" x2="1" y2="1"><stop stopColor="#1fb5e8" /><stop offset="1" stopColor="#2352c8" /></linearGradient></defs><path d="M1.500 24.500L2 18A11.800 11.800 0 1 1 7.500 23.500Z" stroke="url(#bing)" strokeWidth="1.400" /><path d="M9 6l3 1.200v9.300l6-3.300-3.500-1.700-1-2.800L19 11v4l-7 4.700-3-1.700z" fill="url(#bing)" /></svg>
    </div>
    <svg className="ml-[17px] shrink-0" width="31" height="29" viewBox="0 0 31 29"><path d="M8 0h22v20H8z" fill="#f2f2f2" /><path d="M0 8h23v20H0z" fill="#8a8a8a" fillOpacity=".7" /></svg>
    <svg className="ml-[24px] shrink-0" width="29" height="29" viewBox="0 0 29 29"><defs><linearGradient id="chat" x1="0" x2=".4" y2="1"><stop stopColor="#a56fb5" /><stop offset=".4" stopColor="#7b83d8" /><stop offset="1" stopColor="#4f52c9" /></linearGradient></defs><path d="M0.500 28.500L1 20A14 14 0 1 1 9 28z" fill="url(#chat)" /><path d="M7 8h10q1 0 1 1v10q0 1-1 1H7q-1 0-1-1V9q0-1 1-1zM19.500 12l3-2.500v9l-3-2.500z" fill="#fff" /></svg>
    <TaskButton className="ml-[13px]">
      <svg width="30" height="30" viewBox="0 0 30 30"><circle cx="15" cy="15" r="15" fill="#fbc116" /><path d="M2 7.500A15 15 0 0 1 28 7.500H15z" fill="#e33b2e" /><path d="M2 7.500A15 15 0 0 0 15 30L21.500 18.800H15z" fill="#229a45" /><path d="M2 7.500L8.500 18.700L15 15L15 7.500z" fill="#e33b2e" /><path d="M2 7.500L8.500 18.700L15 19z" fill="#229a45" /><circle cx="15" cy="15" r="7.300" fill="#fff" /><circle cx="15" cy="15" r="5.800" fill="#2f7de9" /></svg>
    </TaskButton>
    <TaskButton><Dot />
      <svg width="30" height="27" viewBox="0 0 30 27"><defs><linearGradient id="fold" x2="0" y2="1"><stop stopColor="#ffdf66" /><stop offset="1" stopColor="#f7b916" /></linearGradient></defs><path d="M0 1.500Q0 0 1.500 0H10l3 3v5H0z" fill="#e09a07" /><path d="M0 5H10L13 3H30V27H0z" fill="url(#fold)" /><path d="M5 27V22q0-3 3-3H22q3 0 3 3v5z" fill="#1579cb" /><path d="M8 22.800h14" stroke="#0a4f93" strokeWidth="1.200" /></svg>
    </TaskButton>
    <TaskButton><Dot />
      <svg width="29" height="29" viewBox="0 0 29 29"><defs><linearGradient id="fox" x1="1" x2=".2" y2="1"><stop stopColor="#ffe14a" /><stop offset=".45" stopColor="#ff8a2a" /><stop offset="1" stopColor="#ee1a6a" /></linearGradient></defs><path d="M18 0Q20 3 23 5V8Q25 7 25 5Q29 10 28.500 15C28.500 23 22 28.500 14.500 28.500S0 22 0.500 14Q1 8 4 4.500l2 3Q9 5 14 7Q15 3 18 0z" fill="url(#fox)" /><circle cx="15" cy="14.500" r="6" fill="#7a3fd3" /><path d="M5 8Q10 8 15 12Q11 13 10 15.500Q8 11 3 12z" fill="#ff9530" /></svg>
    </TaskButton>
    <TaskButton><Dot />
      <svg width="29" height="29" viewBox="0 0 29 29" fill="none" stroke="#101010" strokeLinecap="round"><circle cx="14.500" cy="14.500" r="14.300" fill="#1fd75f" stroke="none" /><path d="M6 10Q15 7.500 23.500 12" strokeWidth="2.800" /><path d="M6.500 15Q15 12.500 22 16.500" strokeWidth="2.300" /><path d="M7 19.500Q14.500 17.500 20.500 21" strokeWidth="2" /></svg>
    </TaskButton>
    <TaskButton><Dot />
      <svg width="30" height="30" viewBox="0 0 30 30"><defs><linearGradient id="ed1" x2="1" y2=".3"><stop stopColor="#1a8fd8" /><stop offset=".5" stopColor="#35bfd6" /><stop offset="1" stopColor="#62dd5a" /></linearGradient><linearGradient id="ed2" x2="0" y2="1"><stop stopColor="#1b9be0" /><stop offset="1" stopColor="#0c68c4" /></linearGradient></defs><path d="M0 15A15 15 0 0 1 30 13.500Q30 20 23 20.500Q17.500 20.500 18 18Q20 14 16 11Q8 6 0 15z" fill="url(#ed1)" /><path d="M0 15Q4 7.500 12 8.500Q17.500 9.500 19 14Q15 11.500 12 15.500Q10.500 23 18 29.700A15 15 0 0 1 0 15z" fill="url(#ed2)" /><path d="M11 15.500Q12 23 20 24.500Q25 25 28 22.500Q24 30 15.500 30Q8 24 11 15.500z" fill="#114a8c" /></svg>
    </TaskButton>
    <TaskButton>
      <div className="flex h-[50px] w-[50px] items-center justify-center rounded-[5px] border border-[#454040] bg-[#332d2d]">
        <svg width="28" height="27" viewBox="0 0 28 27" fontFamily="Open Sans"><path d="M13 4h14.500v19H13z" fill="#fff" stroke="#2b579a" strokeWidth="1.500" /><path d="M17 7.500h8M17 10.500h8M17 13.500h8M17 16.500h8M17 19.500h8" stroke="#2b579a" strokeWidth="1.300" /><path d="M0 3L16 0V27L0 24z" fill="#2b579a" /><text x="2" y="18.500" fontSize="13" fontWeight="700" fill="#fff" textLength="12" lengthAdjust="spacingAndGlyphs">W</text></svg>
      </div>
      <Dot className="w-[20px] bg-[#f28066]" />
    </TaskButton>
    <TaskButton>
      <div className="flex h-[50px] w-[50px] items-center justify-center rounded-[5px] bg-[#462828]">
        <svg width="24" height="26" viewBox="0 0 24 26"><path d="M2 0h14v21H2z" fill="#f0c75e" /><path d="M0 0L7 3.500V26L0 23z" fill="#ffe28f" /><path d="M11 23.500a3.500 3.500 0 0 1-.5-6.500a5.500 5.500 0 0 1 9.500 0a3.300 3.300 0 0 1 1 6.500z" fill="#1273c4" /><path d="M10.500 23.500q-3-.500-2-3.500l6-1.500l8 .500q2 3-1 4.500z" fill="#2aa3ec" /></svg>
      </div>
      <Dot className="w-[8px] bg-[#f59aa6]" />
    </TaskButton>
    <svg className="ml-auto shrink-0" width="15" height="9" viewBox="0 0 15 9" fill="none" stroke="#fff" strokeWidth="1.800"><path d="M1 8L7.500 1.500L14 8" /></svg>
    <svg className="ml-[22px] shrink-0" width="21" height="14" viewBox="0 0 21 14"><path d="M4.500 13.500a4.300 4.300 0 0 1-1-8.300A6 6 0 0 1 14.500 3.500L18 6z" fill="#a0a0a0" /><path d="M5 13.500Q1.500 13 2 11Q8 5.500 12 7a6 6 0 0 1 8 3q.500 3-3 3.500z" fill="#f0f0f0" /></svg>
    <div className="ml-[21px] flex w-[32px] flex-col items-center text-[14.500px] leading-[20px]"><span>ENG</span><span>IN</span></div>
    <svg className="ml-[20px] shrink-0" width="21" height="16" viewBox="0 0 21 16" fill="none" stroke="#fff" strokeWidth="1.500"><path d="M1 6.500Q10.500 -3.500 20 6.500M3.800 9.200Q10.500 1.500 17.200 9.200" stroke="#6a6a6a" /><path d="M6.500 11.500Q10.500 7 14.500 11.500" /><circle cx="10.500" cy="13.700" r="1.800" fill="#fff" stroke="none" /></svg>
    <svg className="ml-[9px] shrink-0" width="21" height="18" viewBox="0 0 21 18" fill="none" stroke="#fff" strokeWidth="1.400"><path d="M1 6H4L8.500 2V16L4 12H1z" /><path d="M11 6Q13 9 11 12M13.500 4Q17 9 13.500 14" /><path d="M16.500 2Q21 9 16.500 16" stroke="#6a6a6a" /></svg>
    <svg className="ml-[9px] shrink-0" width="21" height="18" viewBox="0 0 21 18" fill="none" stroke="#fff" strokeWidth="1.500"><path d="M6 4H15.500q2 0 2 2v8q0 2-2 2H3q-2 0-2-2V12" /><path d="M18 8.500h1.500v3H18" /><path d="M8 6.500h7v7H4z" fill="#fff" stroke="none" /><path d="M3.500 0L1 6H3.500L2.500 10.500L6 4.500H4L5 0z" fill="#fff" stroke="none" /></svg>
    <div className="-mt-[2px] ml-[16px] mr-[24px] flex w-[82px] flex-col items-end whitespace-nowrap text-[14.800px] leading-[20px]"><span>21:52</span><span>31-03-2023</span></div>
  </nav>
);

export default function App() {
  return (
    <div className="flex h-[1080px] w-[1920px] flex-col overflow-hidden font-['Open_Sans',sans-serif]">
      <TitleBar />
      <Ribbon />
      <Document />
      <StatusBar />
      <Taskbar />
    </div>
  );
}
